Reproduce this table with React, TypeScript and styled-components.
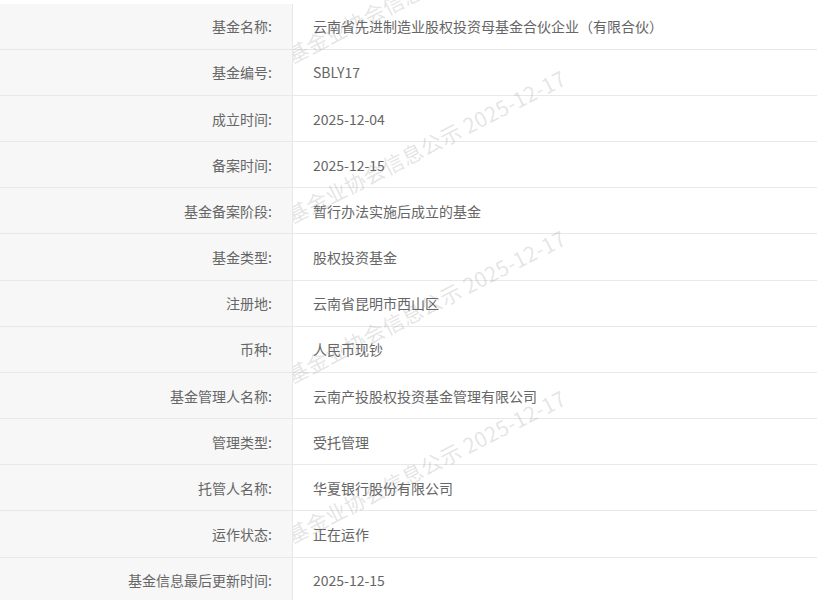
import React from "react";
import styled, { createGlobalStyle } from "styled-components";

const GlobalStyle = createGlobalStyle`
  html, body { margin: 0; padding: 0; background: #ffffff; }
  body { font-family: "Noto Sans CJK SC", "Microsoft YaHei", "Noto Sans", sans-serif; }
`;

const Page = styled.div`
  position: relative;
  padding-top: 3.6px;
  width: 817px;
  box-sizing: border-box;
`;

const Table = styled.div`
  display: flex;
  flex-direction: column;
`;

const Row = styled.div`
  display: grid;
  grid-template-columns: 293px 1fr;
  border-bottom: 1px solid #e8e8e8;
  height: 46.18px;
  box-sizing: border-box;
`;

const Label = styled.div`
  background: #f7f7f7;
  border-right: 1px solid #e8e8e8;
  box-sizing: border-box;
  display: flex;
  align-items: center;
  justify-content: flex-end;
  padding-right: 20px;
  font-size: 14px;
  color: #666666;
  white-space: nowrap;
`;

const Value = styled.div`
  display: flex;
  align-items: center;
  padding-left: 20px;
  font-size: 14px;
  color: #666666;
  white-space: nowrap;
`;

const Watermarks = styled.div`
  position: absolute;
  left: 293px;
  top: 0;
  right: 0;
  bottom: 0;
  overflow: hidden;
  pointer-events: none;
`;

const Mark = styled.span`
  position: absolute;
  left: 0;
  font-size: 21px;
  line-height: 21px;
  letter-spacing: 0.4px;
  color: rgba(120, 120, 120, 0.2);
  white-space: nowrap;
  transform-origin: 0 100%;
  transform: rotate(-27deg);
`;

const rows: [string, string][] = [
  ["基金名称:", "云南省先进制造业股权投资母基金合伙企业（有限合伙）"],
  ["基金编号:", "SBLY17"],
  ["成立时间:", "2025-12-04"],
  ["备案时间:", "2025-12-15"],
  ["基金备案阶段:", "暂行办法实施后成立的基金"],
  ["基金类型:", "股权投资基金"],
  ["注册地:", "云南省昆明市西山区"],
  ["币种:", "人民币现钞"],
  ["基金管理人名称:", "云南产投股权投资基金管理有限公司"],
  ["管理类型:", "受托管理"],
  ["托管人名称:", "华夏银行股份有限公司"],
  ["运作状态:", "正在运作"],
  ["基金信息最后更新时间:", "2025-12-15"],
];

const markBottoms = [66, 226, 386, 546];

export default function App() {
  return (
    <Page>
      <GlobalStyle />
      <Table>
        {rows.map(([k, v]) => (
          <Row key={k}>
            <Label>{k}</Label>
            <Value>{v}</Value>
          </Row>
        ))}
      </Table>
      <Watermarks>
        {markBottoms.map((b) => (
          <Mark key={b} style={{ top: b - 21 }}>
            基金业协会信息公示 2025-12-17
          </Mark>
        ))}
      </Watermarks>
    </Page>
  );
}
